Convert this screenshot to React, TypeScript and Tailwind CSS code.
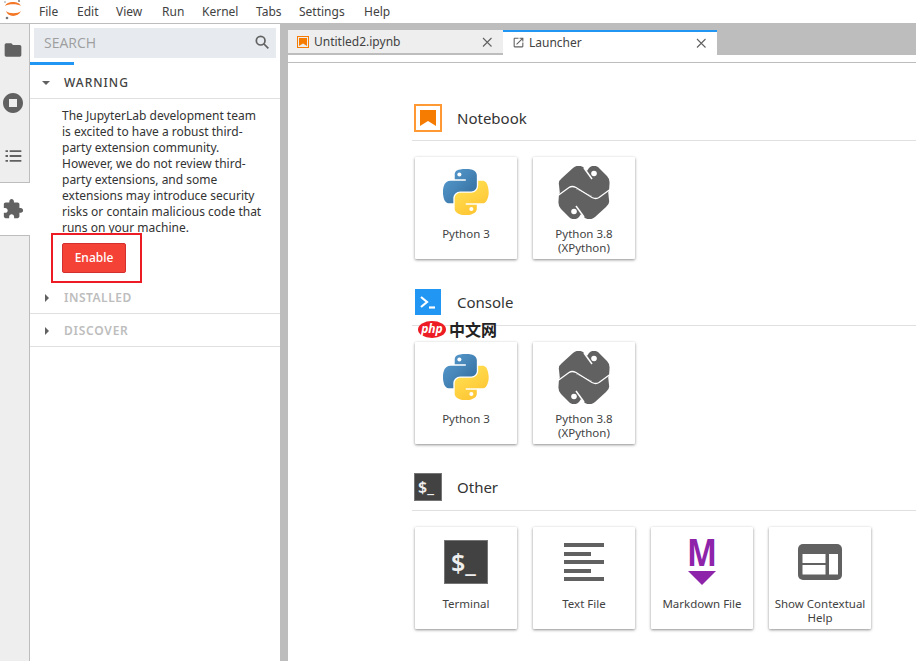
import React from "react";

const FONT = "font-['Noto_Sans','Open_Sans',sans-serif]";

function Md({ d, className }: { d: string; className: string }) {
  return (
    <svg viewBox="0 0 24 24" className={className} fill="currentColor">
      <path d={d} />
    </svg>
  );
}

function JupyterLogo() {
  return (
    <svg viewBox="0 0 26 23" className="w-[26px] h-[23px]">
      <path d="M5 6 C7 0.500 19 0.500 21 6 C18 3.500 8 3.500 5 6Z" fill="#f37726" />
      <path d="M6 11 C8 17.500 18 17.500 21 11 C18 14 9 14 6 11Z" fill="#f37726" />
      <circle cx="19" cy="1" r="1" fill="#767677" />
      <circle cx="7" cy="18" r="1.300" fill="#767677" />
      <circle cx="5" cy="2" r="0.700" fill="#767677" />
    </svg>
  );
}

function PythonLogo({ id }: { id: string }) {
  return (
    <svg viewBox="0 0 112 112" className="w-[46px] h-[46px]">
      <defs>
        <linearGradient id={`${id}b`} x1="0" y1="0" x2="1" y2="1">
          <stop offset="0" stopColor="#5a9fd4" />
          <stop offset="1" stopColor="#306998" />
        </linearGradient>
        <linearGradient id={`${id}y`} x1="0.2" y1="0.1" x2="0.7" y2="1">
          <stop offset="0" stopColor="#ffe052" />
          <stop offset="1" stopColor="#ffc331" />
        </linearGradient>
      </defs>
      <path
        fill={`url(#${id}b)`}
        d="M54.920 0C50.300.020 45.890.420 42.020 1.100 30.620 3.100 28.550 7.300 28.550 15.040v10.220h26.940v3.410H18.430c-7.830 0-14.690 4.710-16.830 13.660-2.470 10.260-2.580 16.670 0 27.380 1.910 7.970 6.480 13.660 14.310 13.660h9.260V71.440c0-8.890 7.690-16.730 16.830-16.730h26.910c7.490 0 13.470-6.170 13.470-13.690V15.040c0-7.300-6.160-12.790-13.470-14.010C64.280.270 59.540-.020 54.920 0z"
      />
      <circle cx="39.900" cy="13.500" r="5" fill="#fff" />
      <path
        fill={`url(#${id}y)`}
        d="M85.640 28.660v11.970c0 9.280-7.870 17.090-16.830 17.090H41.900c-7.370 0-13.470 6.310-13.470 13.690v25.660c0 7.300 6.350 11.590 13.470 13.690 8.530 2.510 16.710 2.960 26.910 0 6.780-1.960 13.470-5.920 13.470-13.690V86.800H55.380v-3.410h40.380c7.830 0 10.750-5.460 13.470-13.660 2.810-8.440 2.690-16.550 0-27.380-1.930-7.800-5.630-13.660-13.470-13.660H85.640z"
      />
      <circle cx="69" cy="97.500" r="5" fill="#fff" />
    </svg>
  );
}

function XPythonLogo() {
  const upper =
    "M9 24 Q8 20 12 17 L23 7 Q28 3 33 6 L37 10 L39 7 Q43 3 48 6 L57 15 Q60 18 59.500 23 L59 30 L49 38 L26 28 L19 28 L10 34 Z";
  return (
    <svg viewBox="8 5 52 53" className="w-[52px] h-[53px]">
      <path fill="#616161" d={upper} />
      <path fill="#616161" d={upper} transform="rotate(180 34 31.500)" />
      <path
        d="M8 34.500 L19 26.500 Q22 24.500 26 26.500 L42 36.500 Q46 38.500 49 36.500 L60 28.500"
        fill="none"
        stroke="#fff"
        strokeWidth="1.300"
      />
      <path d="M34 7 L42 18" fill="none" stroke="#fff" strokeWidth="1.500" />
      <path d="M34 7 L42 18" fill="none" stroke="#fff" strokeWidth="1.500" transform="rotate(180 34 31.500)" />
      <circle cx="44" cy="12.500" r="2.800" fill="#fff" />
      <circle cx="24" cy="50.500" r="2.800" fill="#fff" />
    </svg>
  );
}

function BigTerminal() {
  return (
    <div className="w-[44px] h-[44px] bg-[#424242] border border-[#757575] flex items-center pl-[6px] text-[#eeeeee] font-['Noto_Sans',sans-serif]">
      <span className="text-[25px] leading-none font-semibold">$_</span>
    </div>
  );
}

function TextFileIcon() {
  return (
    <div className="w-[40px] flex flex-col gap-[4.500px]">
      <div className="h-[4px] w-[40px] bg-[#616161]" />
      <div className="h-[4px] w-[27px] bg-[#616161]" />
      <div className="h-[4px] w-[40px] bg-[#616161]" />
      <div className="h-[4px] w-[27px] bg-[#616161]" />
      <div className="h-[4px] w-[40px] bg-[#616161]" />
    </div>
  );
}

function MarkdownIcon() {
  return (
    <svg viewBox="0 0 32 46" className="w-[32px] h-[46px] overflow-visible">
      <text
        x="1"
        y="27"
        textLength="30"
        lengthAdjust="spacingAndGlyphs"
        fontSize="38"
        fontWeight="700"
        fill="#8e24aa"
        fontFamily="'Noto Sans',sans-serif"
      >
        M
      </text>
      <polygon points="2,32 30,32 16,46" fill="#8e24aa" />
    </svg>
  );
}

function HelpIcon() {
  return (
    <svg viewBox="0 0 44 36" className="w-[44px] h-[36px]">
      <rect x="0" y="0" width="44" height="36" rx="5" fill="#616161" />
      <rect x="4.500" y="10" width="23" height="9" fill="#fff" />
      <rect x="4.500" y="21" width="23" height="9.500" fill="#fff" />
      <rect x="31" y="10" width="9" height="20.500" fill="#fff" />
    </svg>
  );
}

function Card({ icon, label }: { icon: React.ReactNode; label: string }) {
  return (
    <div className="w-[102px] h-[102px] bg-white flex flex-col items-center shadow-[0_1px_3px_rgba(0,0,0,0.45)] rounded-[1px]">
      <div className="h-[68px] mt-[1px] flex items-center justify-center shrink-0">{icon}</div>
      <div className="text-[11.500px] leading-[14px] text-[#424242] text-center px-[2px] mt-[1px] w-full">{label}</div>
    </div>
  );
}

function Section({
  icon,
  title,
  head,
  children,
}: {
  icon: React.ReactNode;
  title: string;
  head: string;
  children: React.ReactNode;
}) {
  return (
    <section>
      <div className={`flex items-center border-b border-[#e0e0e0] h-[44px] ${head}`}>
        <div className="flex justify-center w-[30px] ml-[1px]">{icon}</div>
        <h2 className="ml-[14px] text-[15px] leading-[20px] text-[#333333]">{title}</h2>
      </div>
      <div className="flex gap-[16px] pl-[3px] pt-[16px]">{children}</div>
    </section>
  );
}

function Chevron({ open }: { open?: boolean }) {
  return open ? (
    <div className="w-0 h-0 border-l-[4.500px] border-r-[4.500px] border-t-[4.500px] border-l-transparent border-r-transparent border-t-[#616161]" />
  ) : (
    <div className="w-0 h-0 border-t-[4.500px] border-b-[4.500px] border-l-[4.500px] border-t-transparent border-b-transparent border-l-[#616161]" />
  );
}

export default function App() {
  const menus: [string, string][] = [
    ["File", "w-[38px]"],
    ["Edit", "w-[39px]"],
    ["View", "w-[46px]"],
    ["Run", "w-[40px]"],
    ["Kernel", "w-[54px]"],
    ["Tabs", "w-[43px]"],
    ["Settings", "w-[65px]"],
    ["Help", "w-[40px]"],
  ];
  return (
    <div className={`${FONT} w-[916px] h-[661px] overflow-hidden flex flex-col bg-[#bdbdbd] text-[#333333]`}>
      <header className="h-[23px] bg-white flex items-start shrink-0">
        <div className="w-[26px] h-[23px] overflow-hidden">
          <JupyterLogo />
        </div>
        <nav className="flex ml-[13px] h-[23px] items-center">
          {menus.map(([m, w]) => (
            <span key={m} className={`text-[12px] leading-[23px] text-[#424242] ${w}`}>
              {m}
            </span>
          ))}
        </nav>
      </header>

      <div className="flex-1 flex min-h-0 border-t border-[#bdbdbd]">
        <aside className="w-[30px] bg-[#eeeeee] border-r border-[#bdbdbd] shrink-0 flex flex-col text-[#616161]">
          <div className="h-[52px] flex items-center justify-center pr-[3px]">
            <Md className="w-[20px] h-[20px]" d="M10 4H4c-1.100 0-1.990.900-1.990 2L2 18c0 1.100.900 2 2 2h16c1.100 0 2-.900 2-2V8c0-1.100-.900-2-2-2h-8l-2-2z" />
          </div>
          <div className="h-[53px] flex items-center justify-center pr-[3px]">
            <Md className="w-[24px] h-[24px]" d="M12 2C6.480 2 2 6.480 2 12s4.480 10 10 10 10-4.480 10-10S17.520 2 12 2zm4 14H8V8h8v8z" />
          </div>
          <div className="h-[53px] flex items-center justify-center pr-[3px]">
            <Md className="w-[20px] h-[20px]" d="M3 5h3v2.200H3zM8 5h14v2.200H8zM3 10.900h3v2.200H3zM8 10.900h14v2.200H8zM3 16.800h3V19H3zM8 16.800h14V19H8z" />
          </div>
          <div className="h-[54px] bg-white border-y border-[#bdbdbd] -mr-[1px] flex items-center justify-center pr-[4px]">
            <Md className="w-[22px] h-[22px]" d="M20.500 11H19V7c0-1.100-.900-2-2-2h-4V3.500C13 2.120 11.880 1 10.500 1S8 2.120 8 3.500V5H4c-1.100 0-1.990.900-1.990 2v3.800H3.500c1.490 0 2.700 1.210 2.700 2.700s-1.210 2.700-2.700 2.700H2V20c0 1.100.900 2 2 2h3.800v-1.500c0-1.490 1.210-2.700 2.700-2.700 1.490 0 2.700 1.210 2.700 2.700V22H17c1.100 0 2-.900 2-2v-4h1.500c1.380 0 2.500-1.120 2.500-2.500S21.880 11 20.500 11z" />
          </div>
        </aside>

        <div className="w-[250px] bg-white shrink-0 flex flex-col">
          <div className="px-[4px] pt-[4px]">
            <div className="h-[30px] bg-[#e7ebef] flex items-center justify-between pl-[10px] pr-[6px] pb-[1px]">
              <span className="text-[14px] text-[#9e9e9e] font-['Open_Sans',sans-serif]">SEARCH</span>
              <svg viewBox="0 0 24 24" className="w-[16px] h-[16px] text-[#616161] mb-[2px]" fill="none" stroke="currentColor" strokeWidth="2.600">
                <circle cx="10" cy="10" r="6.500" />
                <path d="M15 15 L21.500 21.500" />
              </svg>
            </div>
          </div>
          <div className="h-[3px] w-[44px] bg-[#2196f3] mt-[4px]" />
          <div className="h-[34px] border-b border-[#e0e0e0] flex items-center pl-[12px] pt-[2px]">
            <Chevron open />
            <span className="ml-[14px] text-[12px] font-medium tracking-[1px] text-[#424242]">WARNING</span>
          </div>
          <div className="pl-[32px] pr-[10px] pt-[9px]">
            <p className="text-[12px] leading-[16px] text-[#333333] whitespace-nowrap">
              The JupyterLab development team
              <br />
              is excited to have a robust third-
              <br />
              party extension community.
              <br />
              However, we do not review third-
              <br />
              party extensions, and some
              <br />
              extensions may introduce security
              <br />
              risks or contain malicious code that
              <br />
              runs on your machine.
            </p>
            <div className="relative mt-[7px] h-[39px]">
              <button className="w-[64px] h-[30px] bg-[#f44336] border border-[#d32f2f] rounded-[2px] text-white text-[12px] font-medium">
                Enable
              </button>
              <div className="absolute left-[-11px] top-[-10px] w-[91px] h-[50px] border-2 border-[#ed1c24]" />
            </div>
          </div>
          <div className="h-[32px] border-b border-[#e0e0e0] flex items-center pl-[15px]">
            <Chevron />
            <span className="ml-[15px] text-[12px] font-semibold tracking-[0.5px] text-[#bdbdbd]">INSTALLED</span>
          </div>
          <div className="h-[33px] border-b border-[#e0e0e0] flex items-center pl-[15px] pt-[1px]">
            <Chevron />
            <span className="ml-[15px] text-[12px] font-semibold tracking-[0.75px] text-[#bdbdbd]">DISCOVER</span>
          </div>
        </div>

        <main className="flex-1 ml-[8px] min-w-0 flex flex-col">
          <div className="flex items-start pt-[6px] h-[31px] shrink-0">
            <div className="w-[215px] h-[24px] bg-[#eeeeee] border-b border-[#bdbdbd] flex items-center pl-[9px] pr-[10px] pt-[1px]">
              <div className="w-[12px] h-[12px] border border-[#f57c00] flex items-center justify-center">
                <svg viewBox="0 0 8 8" className="w-[8px] h-[8px]">
                  <polygon points="0,0 8,0 8,8 4,5.500 0,8" fill="#f57c00" />
                </svg>
              </div>
              <span className="ml-[5px] text-[12px] text-[#424242] flex-1">Untitled2.ipynb</span>
              <svg viewBox="0 0 12 12" className="w-[12px] h-[12px]" stroke="#616161" strokeWidth="1.100">
                <path d="M2 2 L10.500 10.500 M10.500 2 L2 10.500" />
              </svg>
            </div>
            <div className="w-[214px] h-[25px] bg-white border-t-2 border-[#2196f3] flex items-center pl-[9px] pr-[10px] pb-[2px]">
              <Md className="w-[13px] h-[13px] text-[#616161]" d="M19 19H5V5h7V3H5c-1.110 0-2 .900-2 2v14c0 1.100.890 2 2 2h14c1.100 0 2-.900 2-2v-7h-2v7zM14 3v2h3.590l-9.830 9.830 1.410 1.410L19 6.410V10h2V3h-7z" />
              <span className="ml-[4px] text-[12px] text-[#424242] flex-1">Launcher</span>
              <svg viewBox="0 0 12 12" className="w-[12px] h-[12px]" stroke="#616161" strokeWidth="1.100">
                <path d="M2 2 L10.500 10.500 M10.500 2 L2 10.500" />
              </svg>
            </div>
          </div>
          <div className="flex-1 bg-white relative">
            <div className="h-[8px] border-b border-[#bdbdbd]" />
            <div className="pl-[124px] flex flex-col">
              <div className="mt-[34px]">
                <Section
                  title="Notebook"
                  head="pb-[1px]"
                  icon={
                    <div className="w-[28px] h-[28px] border-2 border-[#ff9933] flex items-center justify-center">
                      <svg viewBox="0 0 16 16" className="w-[16px] h-[16px]">
                        <polygon points="0,0 16,0 16,16 8,11 0,16" fill="#f57c00" />
                      </svg>
                    </div>
                  }
                >
                  <Card icon={<PythonLogo id="p1" />} label="Python 3" />
                  <Card icon={<XPythonLogo />} label="Python 3.8 (XPython)" />
                </Section>
              </div>
              <div className="mt-[23px]">
                <Section
                  title="Console"
                  head="pb-[3px]"
                  icon={
                    <div className="w-[26px] h-[26px] bg-[#2196f3] flex items-center justify-center">
                      <svg viewBox="0 0 26 26" className="w-[26px] h-[26px]" fill="none" stroke="#fff" strokeWidth="2.200">
                        <path d="M6 8 L12 13 L6 18" />
                        <path d="M14 18.500 H20" />
                      </svg>
                    </div>
                  }
                >
                  <Card icon={<PythonLogo id="p2" />} label="Python 3" />
                  <Card icon={<XPythonLogo />} label="Python 3.8 (XPython)" />
                </Section>
                <div className="absolute left-[130px] top-[265px] flex items-center">
                  <span className="w-[28px] h-[17px] rounded-[50%] bg-[#ed1c24] text-white text-[12px] leading-[15px] italic font-bold text-center">
                    php
                  </span>
                  <span className="ml-[3px] text-[16px] leading-[18px] font-bold text-[#222222] font-['Noto_Sans_CJK_SC',sans-serif]">中文网</span>
                </div>
              </div>
              <div className="mt-[23px]">
                <Section
                  title="Other"
                  head="pb-[3px]"
                  icon={
                    <div className="w-[28px] h-[28px] bg-[#424242] border border-[#757575] flex items-center pl-[3px] text-[#eeeeee]">
                      <span className="text-[16px] leading-none font-semibold">$_</span>
                    </div>
                  }
                >
                  <Card icon={<BigTerminal />} label="Terminal" />
                  <Card icon={<TextFileIcon />} label="Text File" />
                  <Card icon={<MarkdownIcon />} label="Markdown File" />
                  <Card icon={<HelpIcon />} label="Show Contextual Help" />
                </Section>
              </div>
            </div>
          </div>
        </main>
      </div>
    </div>
  );
}
